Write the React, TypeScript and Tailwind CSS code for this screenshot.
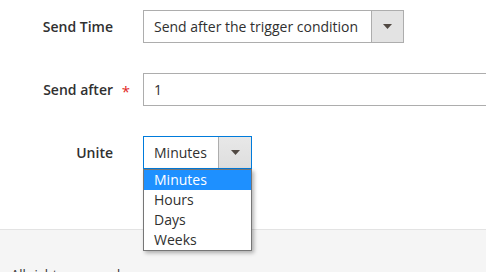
import React from "react";

function Caret() {
    return (
        <svg width="9" height="5" viewBox="0 0 9 5" className="block">
            <path d="M0 0h9L4.5 5z" fill="#514943" />
        </svg>
    );
}

function Label({ text, required }: { text: string; required?: boolean }) {
    return (
        <div className="relative w-[143px] shrink-0 pr-[30px] text-right text-[14px] font-semibold text-[#303030]">
            {text}
            {required && (
                <span className="absolute right-[13px] top-[1px] text-[15px] font-normal text-[#e22626]">
                    *
                </span>
            )}
        </div>
    );
}

const units = ["Minutes", "Hours", "Days", "Weeks"];

export default function App() {
    return (
        <div className="w-[486px] h-[272px] overflow-hidden bg-white font-['Open_Sans',sans-serif] text-[#303030]">
            <div className="pt-[10px] h-[229px]">
                {/* Send Time */}
                <div className="flex items-center mb-[30px]">
                    <Label text="Send Time" />
                    <div className="flex h-[33px] w-[261px] border border-[#adadad] bg-white">
                        <div className="flex-1 flex items-center pl-[10px] text-[14px] whitespace-nowrap">
                            Send after the trigger condition
                        </div>
                        <div className="w-[32px] flex items-center justify-center border-l border-[#adadad] bg-[#e3e3e3]">
                            <Caret />
                        </div>
                    </div>
                </div>

                {/* Send after */}
                <div className="flex items-center mb-[30px]">
                    <Label text="Send after" required />
                    <div className="flex h-[33px] w-[400px] shrink-0 items-center border border-[#adadad] bg-white pl-[10px] text-[14px]">
                        1
                    </div>
                </div>

                {/* Unite */}
                <div className="flex items-center">
                    <Label text="Unite" />
                    <div className="relative">
                        <div className="flex h-[33px] w-[109px] border border-[#007bdb] bg-white">
                            <div className="flex-1 flex items-center pl-[10px] text-[14px]">Minutes</div>
                            <div className="w-[33px] flex items-center justify-center border-l border-[#adadad] bg-gradient-to-b from-[#e8e8e8] to-[#dedede]">
                                <Caret />
                            </div>
                        </div>
                        <ul className="absolute left-0 top-[33px] z-10 w-[109px] border border-[#767676] bg-white shadow-[2px_2px_4px_rgba(0,0,0,0.3)]">
                            {units.map((u, i) => (
                                <li
                                    key={u}
                                    className={
                                        i === 0
                                            ? "h-[20px] leading-[20px] pl-[10px] text-[14px] bg-[#1e90ff] text-white"
                                            : "h-[20px] leading-[20px] pl-[10px] text-[14px] text-[#303030]"
                                    }
                                >
                                    {u}
                                </li>
                            ))}
                        </ul>
                    </div>
                </div>
            </div>

            {/* Footer */}
            <div className="h-[43px] border-t border-[#e3e3e3] bg-[#f5f5f5] pt-[35px] pl-[11px] text-[13px] text-[#303030]">
                All rights reserved.
            </div>
        </div>
    );
}
